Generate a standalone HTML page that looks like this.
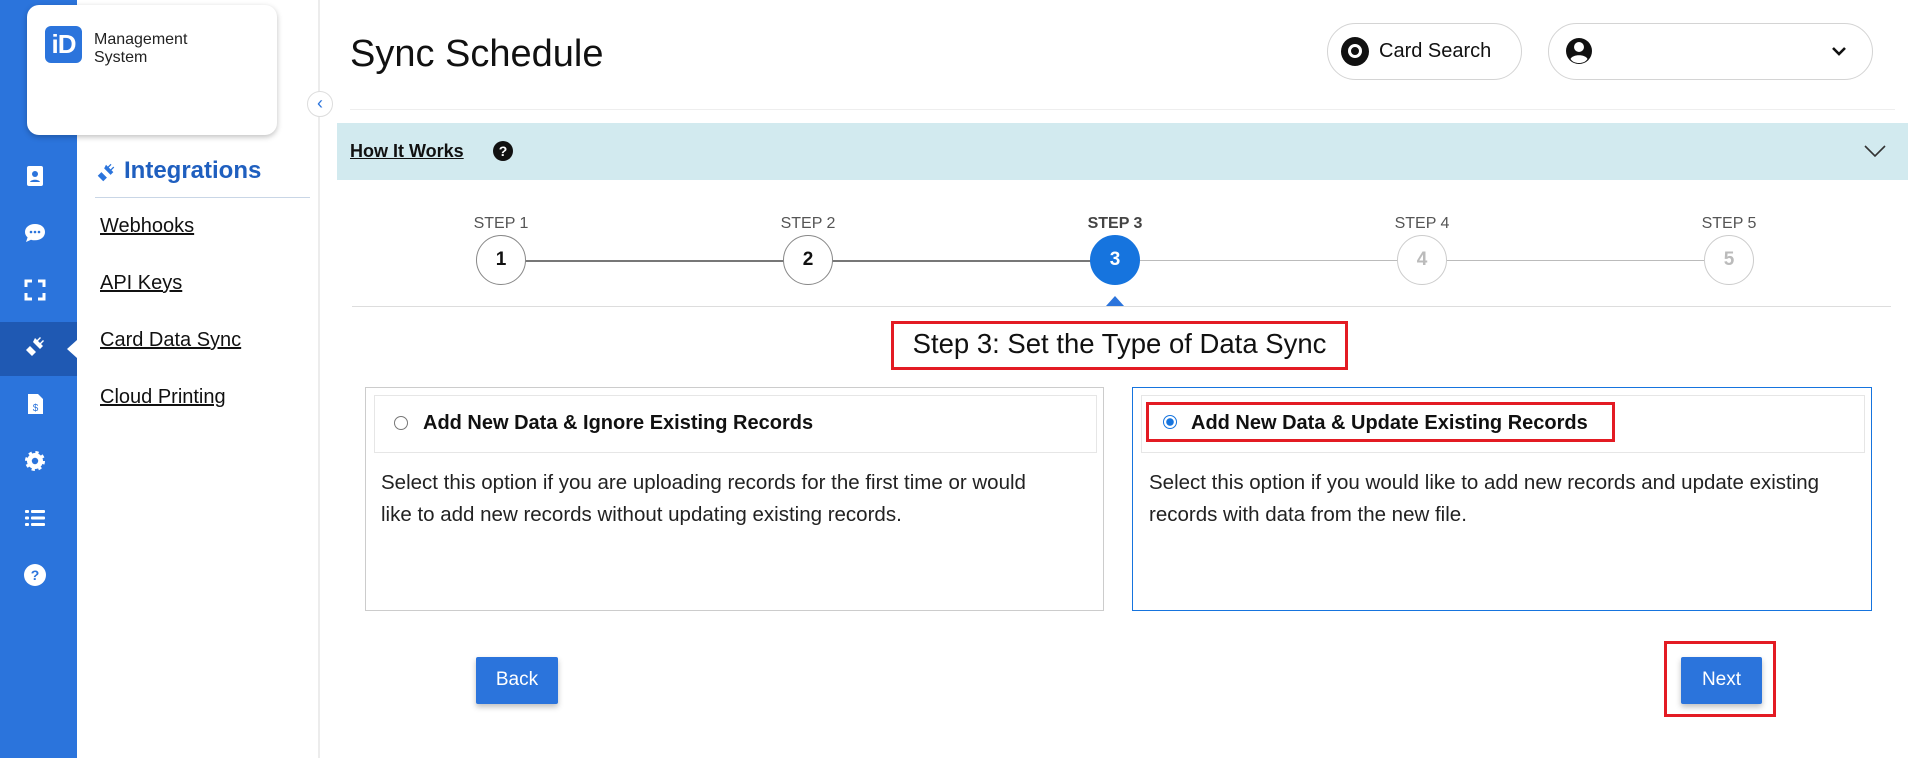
<!DOCTYPE html>
<html><head><meta charset="utf-8"><style>
*{box-sizing:border-box;margin:0;padding:0}
body{width:1908px;height:758px;overflow:hidden;background:#fff;font-family:"Liberation Sans",sans-serif;color:#111;position:relative}
.abs{position:absolute}
.rail{left:0;top:0;width:77px;height:758px;background:#2b74dc}
.act{left:0;top:322px;width:77px;height:54px;background:#1f59b3}
.ico{position:absolute;left:23px;width:24px;height:24px}
.panel{left:77px;top:0;width:243px;height:758px;background:#fff;border-right:2px solid #ececec}
.logo{left:27px;top:5px;width:250px;height:130px;background:#fff;border-radius:12px;box-shadow:0 2px 6px rgba(0,0,0,.25)}
.lnk{position:absolute;left:100px;font-size:20px;text-decoration:underline;color:#111}
.step{position:absolute;width:50px;height:50px;border-radius:50%;border:1px solid #888;background:#fff;text-align:center;line-height:48px;font-weight:bold;font-size:19px}
.lbl{position:absolute;width:100px;text-align:center;font-size:16px;color:#555}
.btn{position:absolute;background:#2b74dc;color:#fff;font-size:19px;text-align:center;line-height:46px;border-radius:2px;box-shadow:0 3px 6px rgba(0,0,0,.25)}
.desc{position:absolute;font-size:20.5px;line-height:32px;color:#222}
.opt{position:absolute;font-size:20px;font-weight:bold}
</style></head><body>
<div class="abs rail"></div>
<div class="abs act"></div>
<div class="abs" style="left:67px;top:340px;width:0;height:0;border-top:9px solid transparent;border-bottom:9px solid transparent;border-right:10px solid #fff"></div>
<svg class="ico" style="top:164px" viewBox="0 0 24 24"><rect x="4" y="2" width="16" height="20" rx="2" fill="#fff"/><circle cx="12" cy="10" r="3" fill="#2b74dc"/><path d="M7 18c1-3 9-3 10 0z" fill="#2b74dc"/></svg>
<svg class="ico" style="top:221px" viewBox="0 0 24 24"><path d="M12 3C6 3 2 6.5 2 11c0 2.2 1 4 2.6 5.4L3 21l5-2.3c1.2.4 2.6.6 4 .6 6 0 10-3.6 10-8.3S18 3 12 3z" fill="#fff"/><circle cx="8" cy="11" r="1.3" fill="#2b74dc"/><circle cx="12" cy="11" r="1.3" fill="#2b74dc"/><circle cx="16" cy="11" r="1.3" fill="#2b74dc"/></svg>
<svg class="ico" style="top:278px" viewBox="0 0 24 24" fill="none" stroke="#fff" stroke-width="3"><path d="M3 9V3h6M15 3h6v6M21 15v6h-6M9 21H3v-6"/></svg>
<svg class="ico" style="top:335px" viewBox="0 0 24 24" fill="#fff"><path d="M2 22l4-4 3 3 4-4-6-6-4 4 3 3-4 4zM10 7l7 7 3-3-2-2 3-3-1-1-3 3-2-2 3-3-1-1-3 3-2-2z"/></svg>
<svg class="ico" style="top:392px" viewBox="0 0 24 24"><path d="M5 2h10l5 5v15H5z" fill="#fff"/><text x="12.5" y="19" font-size="10" text-anchor="middle" fill="#2b74dc" font-family="Liberation Sans">$</text></svg>
<svg class="ico" style="top:449px" viewBox="0 0 24 24"><circle cx="12" cy="12" r="8" fill="#fff" stroke="#fff" stroke-width="4" stroke-dasharray="3 3.3"/><circle cx="12" cy="12" r="3.2" fill="#2b74dc"/></svg>
<svg class="ico" style="top:506px" viewBox="0 0 24 24" fill="#fff"><rect x="2" y="4" width="4" height="3" rx="1"/><rect x="2" y="10.5" width="4" height="3" rx="1"/><rect x="2" y="17" width="4" height="3" rx="1"/><rect x="8" y="4" width="14" height="3" rx="1"/><rect x="8" y="10.5" width="14" height="3" rx="1"/><rect x="8" y="17" width="14" height="3" rx="1"/></svg>
<svg class="ico" style="top:563px" viewBox="0 0 24 24"><circle cx="12" cy="12" r="11" fill="#fff"/><text x="12" y="17" font-size="14" font-weight="bold" text-anchor="middle" fill="#2b74dc" font-family="Liberation Sans">?</text></svg>

<div class="abs panel"></div>
<div class="abs logo">
 <div class="abs" style="left:18px;top:21px;width:37px;height:37px;background:#2b74dc;border-radius:6px;color:#fff;font-weight:bold;font-size:26px;line-height:37px;text-align:center;letter-spacing:-1px">iD</div>
 <div class="abs" style="left:67px;top:26px;font-size:16px;line-height:18px;color:#222">Management<br>System</div>
</div>
<div class="abs" style="left:307px;top:91px;width:26px;height:26px;border-radius:50%;background:#fff;border:1px solid #ddd;color:#2b74dc;text-align:center;line-height:22px;font-size:18px">&#8249;</div>
<svg class="abs" style="left:95px;top:162px" width="22" height="22" viewBox="0 0 24 24" fill="#2b74dc"><path d="M2 22l4-4 3 3 4-4-6-6-4 4 3 3-4 4zM10 7l7 7 3-3-2-2 3-3-1-1-3 3-2-2 3-3-1-1-3 3-2-2z"/></svg>
<div class="abs" style="left:124px;top:157px;font-size:24px;font-weight:bold;color:#1f5fbf">Integrations</div>
<div class="abs" style="left:95px;top:197px;width:215px;height:1px;background:#c9d6e6"></div>
<div class="lnk" style="top:215px">Webhooks</div>
<div class="lnk" style="top:272px">API Keys</div>
<div class="lnk" style="top:329px">Card Data Sync</div>
<div class="lnk" style="top:386px">Cloud Printing</div>

<div class="abs" style="left:350px;top:33px;font-size:38px;color:#111">Sync Schedule</div>
<div class="abs" style="left:1327px;top:23px;width:195px;height:57px;border:1px solid #d4d4d4;border-radius:29px"></div>
<div class="abs" style="left:1341px;top:37px;width:28px;height:29px;border-radius:50%;background:#111"></div>
<div class="abs" style="left:1348px;top:44px;width:14px;height:14px;border-radius:50%;border:3px solid #fff"></div>
<div class="abs" style="left:1379px;top:40px;font-size:20px">Card Search</div>
<div class="abs" style="left:1548px;top:23px;width:325px;height:57px;border:1px solid #d4d4d4;border-radius:29px"></div>
<svg class="abs" style="left:1565px;top:36px" width="28" height="30" viewBox="0 0 28 30"><circle cx="14" cy="15" r="13" fill="#111"/><circle cx="14" cy="11" r="5" fill="#fff"/><path d="M5.5 23c2-5 15-5 17 0c-2 3-5 4-8.5 4s-6.5-1-8.5-4z" fill="#fff"/></svg>
<svg class="abs" style="left:1831px;top:45px" width="16" height="12" viewBox="0 0 16 12"><path d="M2 3l6 6 6-6" stroke="#111" stroke-width="2.6" fill="none"/></svg>
<div class="abs" style="left:350px;top:109px;width:1545px;height:1px;background:#eee"></div>

<div class="abs" style="left:337px;top:123px;width:1571px;height:57px;background:#d2eaef"></div>
<div class="abs" style="left:350px;top:141px;font-size:18px;font-weight:bold;text-decoration:underline">How It Works</div>
<div class="abs" style="left:493px;top:141px;width:20px;height:20px;border-radius:50%;background:#111;color:#fff;font-size:14px;font-weight:bold;text-align:center;line-height:20px">?</div>
<svg class="abs" style="left:1864px;top:144px" width="22" height="14" viewBox="0 0 22 14"><path d="M1 2l10 10 10-10" stroke="#333" stroke-width="1.6" fill="none"/></svg>

<div class="abs" style="left:501px;top:260px;width:614px;height:2px;background:#777"></div>
<div class="abs" style="left:1115px;top:260px;width:614px;height:1px;background:#bbb"></div>
<div class="lbl" style="left:451px;top:215px">STEP 1</div>
<div class="lbl" style="left:758px;top:215px">STEP 2</div>
<div class="lbl" style="left:1065px;top:215px;font-weight:bold;color:#444">STEP 3</div>
<div class="lbl" style="left:1372px;top:215px">STEP 4</div>
<div class="lbl" style="left:1679px;top:215px">STEP 5</div>
<div class="step" style="left:476px;top:235px">1</div>
<div class="step" style="left:783px;top:235px">2</div>
<div class="step" style="left:1090px;top:235px;background:#1674de;border-color:#1674de;color:#fff">3</div>
<div class="step" style="left:1397px;top:235px;border-color:#ccc;color:#bbb">4</div>
<div class="step" style="left:1704px;top:235px;border-color:#ccc;color:#bbb">5</div>
<div class="abs" style="left:1106px;top:296px;width:0;height:0;border-left:9px solid transparent;border-right:9px solid transparent;border-bottom:10px solid #2b74dc"></div>
<div class="abs" style="left:352px;top:306px;width:1539px;height:1px;background:#ddd"></div>

<div class="abs" style="left:891px;top:321px;width:457px;height:49px;border:3px solid #e31b23"></div>
<div class="abs" style="left:891px;top:328px;width:457px;text-align:center;font-size:27.5px">Step 3: Set the Type of Data Sync</div>

<div class="abs" style="left:365px;top:387px;width:739px;height:224px;border:1px solid #ccc"></div>
<div class="abs" style="left:374px;top:395px;width:723px;height:58px;border:1px solid #e6e6e6"></div>
<div class="abs" style="left:394px;top:416px;width:14px;height:14px;border-radius:50%;border:1px solid #777"></div>
<div class="opt" style="left:423px;top:412px">Add New Data &amp; Ignore Existing Records</div>
<div class="desc" style="left:381px;top:467px">Select this option if you are uploading records for the first time or would<br>like to add new records without updating existing records.</div>

<div class="abs" style="left:1132px;top:387px;width:740px;height:224px;border:1px solid #1674de"></div>
<div class="abs" style="left:1141px;top:395px;width:724px;height:58px;border:1px solid #e6e6e6"></div>
<div class="abs" style="left:1146px;top:402px;width:469px;height:40px;border:3px solid #e31b23"></div>
<div class="abs" style="left:1163px;top:415px;width:14px;height:14px;border-radius:50%;border:1px solid #1674de;background:radial-gradient(circle,#1674de 3.5px,#fff 4px)"></div>
<div class="opt" style="left:1191px;top:412px">Add New Data &amp; Update Existing Records</div>
<div class="desc" style="left:1149px;top:467px">Select this option if you would like to add new records and update existing<br>records with data from the new file.</div>

<div class="btn" style="left:476px;top:657px;width:82px;height:47px">Back</div>
<div class="abs" style="left:1664px;top:641px;width:112px;height:76px;border:3px solid #e31b23"></div>
<div class="btn" style="left:1681px;top:657px;width:81px;height:47px">Next</div>
</body></html>
